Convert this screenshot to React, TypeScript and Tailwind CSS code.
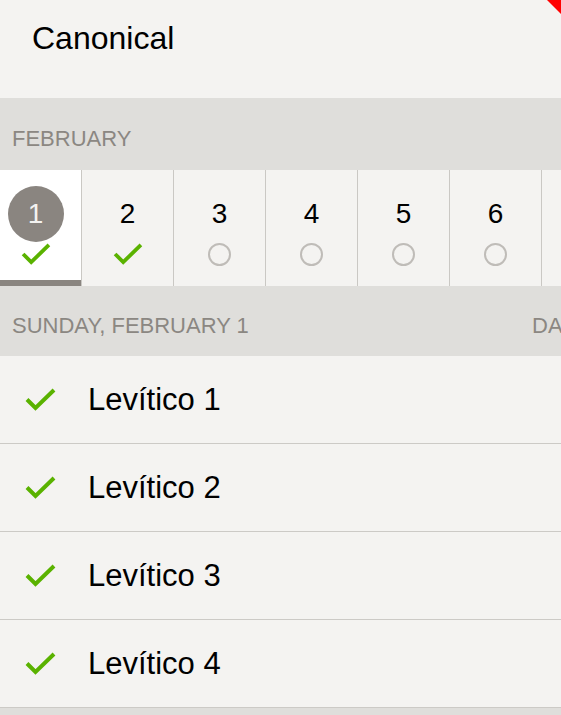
import React from 'react'

const font = { fontFamily: '"Liberation Sans", Arial, sans-serif' }

function Check({ w = 31, h = 23 }: { w?: number; h?: number }) {
  return (
    <svg width={w} height={h} viewBox="0 0 31 23" fill="none">
      <polyline points="2,11.5 10.5,20 29,2" stroke="#5ab200" strokeWidth="4" strokeLinejoin="miter" />
    </svg>
  )
}

const days = [
  { n: 1, done: true, selected: true },
  { n: 2, done: true },
  { n: 3 },
  { n: 4 },
  { n: 5 },
  { n: 6 },
]

const readings = ['Levítico 1', 'Levítico 2', 'Levítico 3', 'Levítico 4']

export default function App() {
  return (
    <div className="relative w-[561px] h-[715px] overflow-hidden bg-[#f4f3f1] text-black" style={font}>
      <div className="h-[98px] pl-[32px] pt-[22px] text-[32px] leading-none">Canonical</div>

      <div className="h-[72px] bg-[#dfdedb] pl-[12px] pt-[30px] text-[22px] leading-none text-[#8b8782]">FEBRUARY</div>

      <div className="flex h-[116px] -ml-[10px] overflow-hidden">
        {days.map((d) => (
          <div
            key={d.n}
            className={
              d.selected
                ? 'flex h-full w-[92px] shrink-0 flex-col items-center border-r border-[#cac8c4] bg-white pt-[16px]'
                : 'flex h-full w-[92px] shrink-0 flex-col items-center border-r border-[#cac8c4] pt-[16px]'
            }
          >
            <div
              className={
                d.selected
                  ? 'flex h-[56px] w-[56px] items-center justify-center rounded-full bg-[#8a8580] text-[28px] leading-none text-[#f4f3f1]'
                  : 'flex h-[56px] w-[56px] items-center justify-center text-[28px] leading-none'
              }
            >
              {d.n}
            </div>
            <div className="flex h-[24px] items-center justify-center">
              {d.done ? (
                <Check w={30} h={22} />
              ) : (
                <div className="h-[23px] w-[23px] rounded-full border-2 border-[#bfbcb8]" />
              )}
            </div>
            {d.selected && <div className="mt-auto h-[6px] w-full bg-[#8a8580]" />}
          </div>
        ))}
        <div className="h-full w-[92px] shrink-0" />
      </div>

      <div className="flex h-[70px] overflow-hidden whitespace-nowrap bg-[#dfdedb] pl-[12px] pt-[29px] text-[22px] leading-none text-[#8b8782]">
        <span className="w-[520px] shrink-0">SUNDAY, FEBRUARY 1</span>
        <span className="shrink-0">DAY 32</span>
      </div>

      {readings.map((r) => (
        <div key={r} className="flex h-[88px] items-center border-b border-[#cccac6] pl-[25px]">
          <Check />
          <span className="ml-[32px] text-[31px] leading-none">{r}</span>
        </div>
      ))}

      <div className="h-[20px] bg-[#dfdedb]" />

      <div
        className="absolute right-0 top-0 h-[14px] w-[14px] bg-[#ff0000]"
        style={{ clipPath: 'polygon(0 0, 100% 0, 100% 100%)' }}
      />
    </div>
  )
}
